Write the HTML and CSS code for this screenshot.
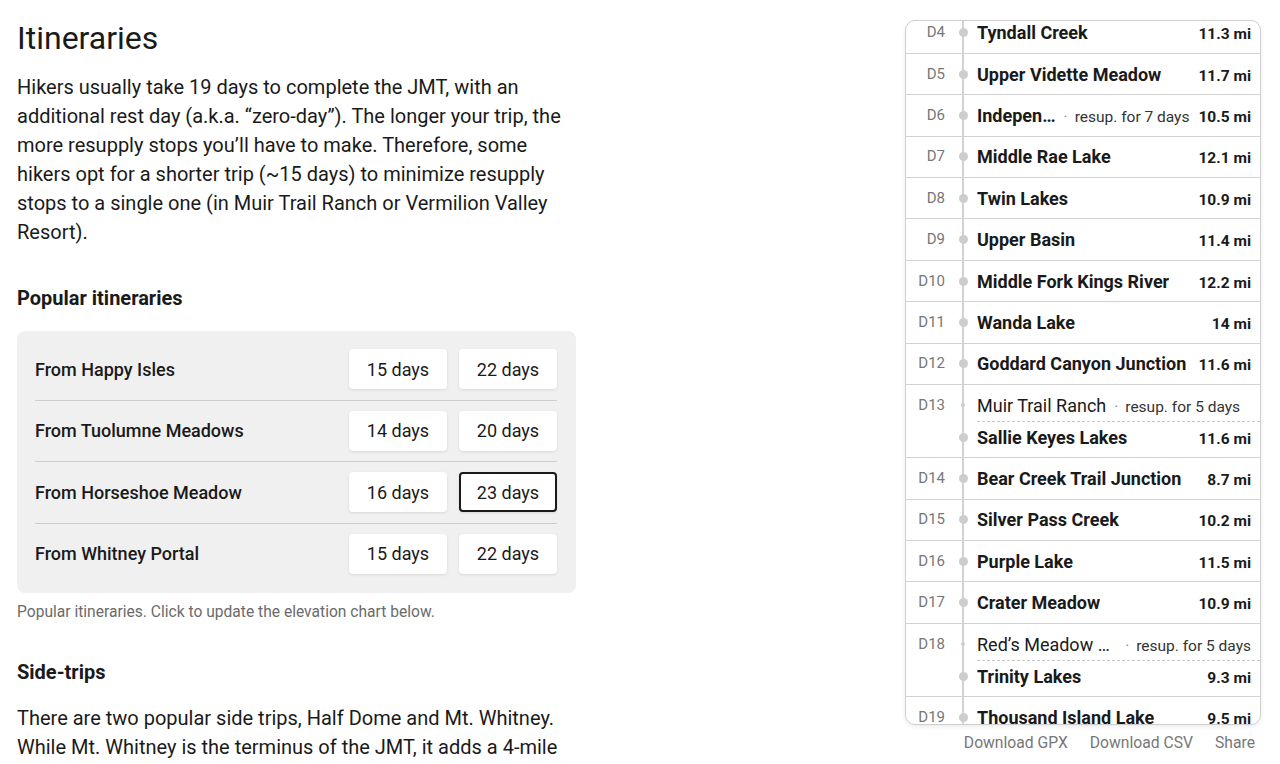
FILE: index.html
```html
<!DOCTYPE html>
<html lang="en">
<head>
  <meta charset="UTF-8" />
  <meta name="viewport" content="width=device-width, initial-scale=1.0">
  <title>Itineraries | JMT</title>
  <link rel="stylesheet" href="styles.css">
</head>
<body>
  <div class="page">
    <main class="article">
      <h1>Itineraries</h1>
      <p>Hikers usually take 19 days to complete the JMT, with an additional rest day (a.k.a. “zero-day”). The longer your trip, the more resupply stops you’ll have to make. Therefore, some hikers opt for a shorter trip (~15 days) to minimize resupply stops to a single one (in Muir Trail Ranch or Vermilion Valley Resort).</p>

      <h2>Popular itineraries</h2>
      <div class="itinerary-box">
        <div class="itinerary-row">
          <span class="trailhead">From Happy Isles</span>
          <button class="days-btn">15 days</button>
          <button class="days-btn">22 days</button>
        </div>
        <div class="itinerary-row">
          <span class="trailhead">From Tuolumne Meadows</span>
          <button class="days-btn">14 days</button>
          <button class="days-btn">20 days</button>
        </div>
        <div class="itinerary-row">
          <span class="trailhead">From Horseshoe Meadow</span>
          <button class="days-btn">16 days</button>
          <button class="days-btn selected">23 days</button>
        </div>
        <div class="itinerary-row">
          <span class="trailhead">From Whitney Portal</span>
          <button class="days-btn">15 days</button>
          <button class="days-btn">22 days</button>
        </div>
      </div>
      <p class="caption">Popular itineraries. Click to update the elevation chart below.</p>

      <h2 class="side-title">Side-trips</h2>
      <p class="side-text">There are two popular side trips, Half Dome and Mt. Whitney. While Mt. Whitney is the terminus of the JMT, it adds a 4-mile round trip from Trail Crest, and Half Dome is a short detour from the trail near Little Yosemite Valley.</p>
    </main>

    <aside class="plan">
      <div class="plan-box">
        <ul class="days">
          <li class="day">
            <span class="day-num">D4</span>
            <div class="stops">
              <div class="stop"><span class="dot-cell"><span class="dot"></span></span><span class="stop-body"><span class="stop-name">Tyndall Creek</span><span class="dist">11.3 mi</span></span></div>
            </div>
          </li>
          <li class="day">
            <span class="day-num">D5</span>
            <div class="stops">
              <div class="stop"><span class="dot-cell"><span class="dot"></span></span><span class="stop-body"><span class="stop-name">Upper Vidette Meadow</span><span class="dist">11.7 mi</span></span></div>
            </div>
          </li>
          <li class="day">
            <span class="day-num">D6</span>
            <div class="stops">
              <div class="stop"><span class="dot-cell"><span class="dot"></span></span><span class="stop-body"><span class="stop-name">Independence</span><span class="note">resup. for 7 days</span><span class="dist">10.5 mi</span></span></div>
            </div>
          </li>
          <li class="day">
            <span class="day-num">D7</span>
            <div class="stops">
              <div class="stop"><span class="dot-cell"><span class="dot"></span></span><span class="stop-body"><span class="stop-name">Middle Rae Lake</span><span class="dist">12.1 mi</span></span></div>
            </div>
          </li>
          <li class="day">
            <span class="day-num">D8</span>
            <div class="stops">
              <div class="stop"><span class="dot-cell"><span class="dot"></span></span><span class="stop-body"><span class="stop-name">Twin Lakes</span><span class="dist">10.9 mi</span></span></div>
            </div>
          </li>
          <li class="day">
            <span class="day-num">D9</span>
            <div class="stops">
              <div class="stop"><span class="dot-cell"><span class="dot"></span></span><span class="stop-body"><span class="stop-name">Upper Basin</span><span class="dist">11.4 mi</span></span></div>
            </div>
          </li>
          <li class="day">
            <span class="day-num">D10</span>
            <div class="stops">
              <div class="stop"><span class="dot-cell"><span class="dot"></span></span><span class="stop-body"><span class="stop-name">Middle Fork Kings River</span><span class="dist">12.2 mi</span></span></div>
            </div>
          </li>
          <li class="day">
            <span class="day-num">D11</span>
            <div class="stops">
              <div class="stop"><span class="dot-cell"><span class="dot"></span></span><span class="stop-body"><span class="stop-name">Wanda Lake</span><span class="dist">14 mi</span></span></div>
            </div>
          </li>
          <li class="day">
            <span class="day-num">D12</span>
            <div class="stops">
              <div class="stop"><span class="dot-cell"><span class="dot"></span></span><span class="stop-body"><span class="stop-name">Goddard Canyon Junction</span><span class="dist">11.6 mi</span></span></div>
            </div>
          </li>
          <li class="day">
            <span class="day-num">D13</span>
            <div class="stops">
              <div class="stop resupply"><span class="dot-cell"><span class="dot small"></span></span><span class="stop-body"><span class="stop-name">Muir Trail Ranch</span><span class="note">resup. for 5 days</span></span></div>
              <div class="stop after-resupply"><span class="dot-cell"><span class="dot"></span></span><span class="stop-body"><span class="stop-name">Sallie Keyes Lakes</span><span class="dist">11.6 mi</span></span></div>
            </div>
          </li>
          <li class="day">
            <span class="day-num">D14</span>
            <div class="stops">
              <div class="stop"><span class="dot-cell"><span class="dot"></span></span><span class="stop-body"><span class="stop-name">Bear Creek Trail Junction</span><span class="dist">8.7 mi</span></span></div>
            </div>
          </li>
          <li class="day">
            <span class="day-num">D15</span>
            <div class="stops">
              <div class="stop"><span class="dot-cell"><span class="dot"></span></span><span class="stop-body"><span class="stop-name">Silver Pass Creek</span><span class="dist">10.2 mi</span></span></div>
            </div>
          </li>
          <li class="day">
            <span class="day-num">D16</span>
            <div class="stops">
              <div class="stop"><span class="dot-cell"><span class="dot"></span></span><span class="stop-body"><span class="stop-name">Purple Lake</span><span class="dist">11.5 mi</span></span></div>
            </div>
          </li>
          <li class="day">
            <span class="day-num">D17</span>
            <div class="stops">
              <div class="stop"><span class="dot-cell"><span class="dot"></span></span><span class="stop-body"><span class="stop-name">Crater Meadow</span><span class="dist">10.9 mi</span></span></div>
            </div>
          </li>
          <li class="day">
            <span class="day-num">D18</span>
            <div class="stops">
              <div class="stop resupply"><span class="dot-cell"><span class="dot small"></span></span><span class="stop-body"><span class="stop-name">Red’s Meadow Resort</span><span class="note">resup. for 5 days</span></span></div>
              <div class="stop after-resupply"><span class="dot-cell"><span class="dot"></span></span><span class="stop-body"><span class="stop-name">Trinity Lakes</span><span class="dist">9.3 mi</span></span></div>
            </div>
          </li>
          <li class="day">
            <span class="day-num">D19</span>
            <div class="stops">
              <div class="stop"><span class="dot-cell"><span class="dot"></span></span><span class="stop-body"><span class="stop-name">Thousand Island Lake</span><span class="dist">9.5 mi</span></span></div>
            </div>
          </li>
          <li class="day">
            <span class="day-num">D20</span>
            <div class="stops">
              <div class="stop"><span class="dot-cell"><span class="dot"></span></span><span class="stop-body"><span class="stop-name">Tuolumne Meadows</span><span class="dist">12.4 mi</span></span></div>
            </div>
          </li>
        </ul>
      </div>
      <div class="plan-links">
        <a href="#">Download GPX</a>
        <a href="#">Download CSV</a>
        <a href="#">Share</a>
      </div>
    </aside>
  </div>
</body>
</html>
```

FILE: styles.css
```css
:root {
  --text-color: #1a1a1a;
  --muted: #6b6b6b;
  --line: #d2d2d2;
  --box-bg: #f0f0f0;
}

body {
  margin: 0;
  font-family: Roboto, 'Noto Sans', Arial, sans-serif;
  color: var(--text-color);
  background: white;
}

.page {
  display: flex;
  justify-content: space-between;
  align-items: flex-start;
  padding: 0 19px 0 17px;
  height: 764px;
  overflow: hidden;
}

/* left column */

.article {
  width: 559px;
  flex: none;
}

h1 {
  font-size: 32px;
  font-weight: 400;
  line-height: 38px;
  margin: 19px 0 16px;
}

p {
  font-size: 20px;
  line-height: 29px;
  margin: 0;
}

h2 {
  font-size: 20px;
  font-weight: 700;
  line-height: 24px;
  margin: 38.5px 0 21px;
}

.itinerary-box {
  background: var(--box-bg);
  border-radius: 8px;
  padding: 8.5px 19px 8.5px 18px;
}

.itinerary-row {
  display: flex;
  align-items: center;
  height: 60.5px;
  gap: 12px;
  border-bottom: 1px solid #cdcdcd;
}

.itinerary-row:last-child {
  border-bottom: none;
}

.trailhead {
  flex: 1;
  font-size: 18px;
  font-weight: 500;
}

.days-btn {
  width: 98px;
  height: 40px;
  font-family: inherit;
  font-size: 18px;
  color: var(--text-color);
  background: white;
  border: 2px solid white;
  border-radius: 4px;
  box-shadow: 0 1px 3px rgba(0, 0, 0, 0.1);
  cursor: pointer;
}

.days-btn.selected {
  border-color: #1a1a1a;
}

.caption {
  font-size: 15.6px;
  line-height: 20px;
  color: var(--muted);
  margin-top: 9px;
}

.side-title {
  margin: 38px 0 20.5px;
}

/* right column: day by day plan */

.plan {
  width: 356px;
  flex: none;
  margin-top: 20px;
}

.plan-box {
  height: 703px;
  border: 1px solid #cfcfcf;
  border-radius: 10px;
  overflow: hidden;
  box-shadow: 0 2px 4px rgba(0, 0, 0, 0.08);
}

.days {
  list-style: none;
  margin: -8.4px 0 0;
  padding: 0;
  background: linear-gradient(var(--line), var(--line)) no-repeat 56px 0 / 2px 100%;
}

.day {
  display: flex;
  align-items: flex-start;
  border-bottom: 1px solid var(--line);
}

.day-num {
  flex: none;
  width: 39px;
  height: 21px;
  padding: 9.7px 1px 0 0;
  text-align: right;
  font-size: 15px;
  line-height: 21px;
  color: #777;
}

.stops {
  flex: 1;
  min-width: 0;
}

.stop {
  display: flex;
}

.dot-cell,
.stop-body {
  height: 21px;
  padding: 9.7px 0;
  line-height: 21px;
}

.dot-cell {
  flex: none;
  width: 31px;
  display: flex;
  align-items: center;
}

.dot {
  width: 9px;
  height: 9px;
  margin-left: 12.5px;
  border-radius: 50%;
  background: #cdcdcd;
}

.dot.small {
  width: 4px;
  height: 4px;
  margin-left: 15px;
}

.stop-body {
  flex: 1;
  min-width: 0;
  display: flex;
  align-items: baseline;
  padding-right: 9px;
}

.stop-name {
  flex: 0 1 auto;
  min-width: 0;
  font-size: 18px;
  font-weight: 700;
  white-space: nowrap;
  overflow: hidden;
  text-overflow: ellipsis;
}

.note {
  flex: none;
  font-size: 15.5px;
  color: #333;
  white-space: nowrap;
  margin-left: 8px;
}

.note::before {
  content: "·";
  margin-right: 7px;
  color: #888;
}

.dist {
  flex: none;
  margin-left: auto;
  padding-left: 9px;
  font-size: 15.5px;
  font-weight: 700;
  white-space: nowrap;
}

.resupply .stop-name {
  font-weight: 400;
}

.resupply > .dot-cell,
.resupply > .stop-body {
  padding-bottom: 5px;
}

.resupply > .stop-body {
  border-bottom: 1px dashed #c8c8c8;
}

.after-resupply > .dot-cell,
.after-resupply > .stop-body {
  padding-top: 5px;
}

.plan-links {
  display: flex;
  justify-content: flex-end;
  gap: 22px;
  padding: 8px 6px 0 0;
  font-size: 15.7px;
  line-height: 20px;
}

.plan-links a {
  color: #777;
  text-decoration: none;
}
```
